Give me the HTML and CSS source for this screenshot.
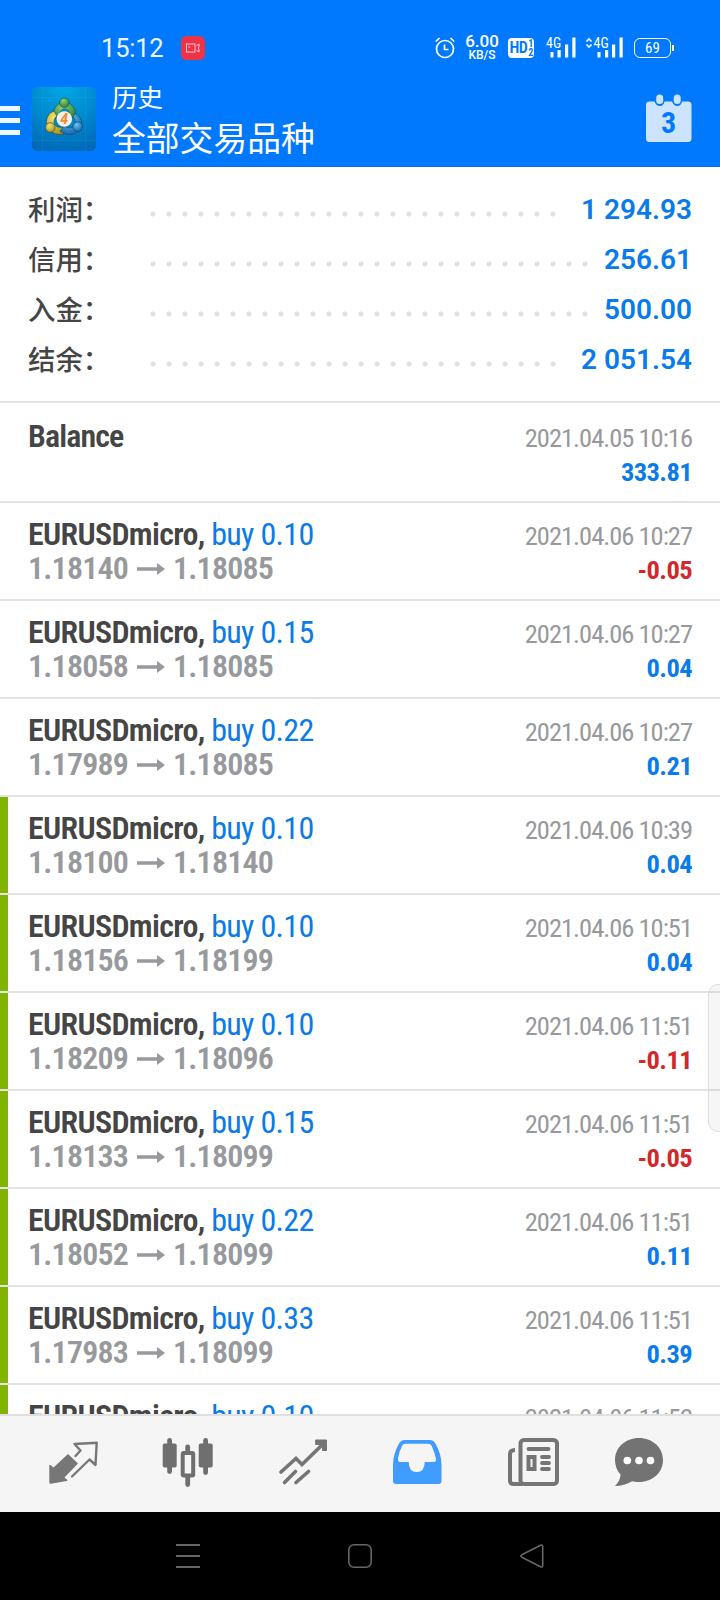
FILE: index.html
```
<!DOCTYPE html>
<html lang="zh-CN">
<head>
<meta charset="utf-8">
<title>历史</title>
<link rel="stylesheet" href="styles.css">
</head>
<body>
<div class="screen">
<header class="header">
  <div class="status">
    <span class="time">15:12</span>
    <svg class="rec" width="24" height="24" viewBox="0 0 24 24"><rect width="24" height="24" rx="5.5" fill="#eb3349"/><g fill="none" stroke="#ffc4cc" stroke-width="1"><rect x="5.500" y="8" width="8.500" height="8"/><path d="M15.500 9.500l2.500-1.500v3l-1 1 1 1v3l-2.500-1.500"/></g><circle cx="8.200" cy="11" r=".8" fill="#ffc4cc"/></svg>
    <svg class="alarm" width="20" height="22" viewBox="0 0 20 22" fill="none" stroke="#fff" stroke-width="1.700"><circle cx="10" cy="12" r="8.500"/><path d="M9.500 7.500v5h4M.8 4.500L4.500 1M19.200 4.500L15.500 1"/></svg>
    <span class="rate"><b>6.00</b><i>KB/S</i></span>
    <span class="hd"><span>HD</span><span class="hd-n"><i>1</i><i>2</i></span></span>
    <svg class="sig1" width="32" height="24" viewBox="0 0 32 24" fill="#fff"><text x="0" y="12">4G</text><rect x="4.500" y="16" width="3" height="5.500"/><rect x="11.500" y="14" width="3.200" height="7.500"/><rect x="19" y="8.500" width="3.200" height="13"/><rect x="26.300" y="1.500" width="3.200" height="20"/></svg>
    <svg class="sig2" width="40" height="24" viewBox="0 0 40 24" fill="#fff"><path d="M1.500 5.500L4 3l2.500 2.500M1.500 8.500L4 11l2.500-2.500" fill="none" stroke="#fff" stroke-width="1.700"/><text x="8.500" y="12">4G</text><rect x="12.500" y="16" width="3" height="5.500"/><rect x="20" y="14" width="3.200" height="7.500"/><rect x="27" y="8.500" width="3.200" height="13"/><rect x="34.500" y="1.500" width="3.200" height="20"/></svg>
    <span class="battery">69</span>
  </div>
  <div class="appbar">
    <div class="burger"><span></span><span></span><span></span></div>
    <svg class="logo" width="64" height="64" viewBox="0 0 64 64">
      <defs>
        <radialGradient id="bg" cx=".5" cy="0" r="1.1"><stop offset="0" stop-color="#00a8e6"/><stop offset=".55" stop-color="#0085cc"/><stop offset="1" stop-color="#0064b4"/></radialGradient>
        <radialGradient id="gr" cx=".4" cy=".3" r=".8"><stop offset="0" stop-color="#8fce7c"/><stop offset="1" stop-color="#1d7a2c"/></radialGradient>
        <radialGradient id="ye" cx=".4" cy=".3" r=".8"><stop offset="0" stop-color="#f2e570"/><stop offset="1" stop-color="#a38c12"/></radialGradient>
        <radialGradient id="bl" cx=".4" cy=".3" r=".8"><stop offset="0" stop-color="#6cc4f8"/><stop offset="1" stop-color="#0a5ba4"/></radialGradient>
      </defs>
      <rect width="64" height="64" rx="5" fill="url(#bg)"/>
      <path d="M0 10.500h64M0 53.500h64M10.500 0v64M53.500 0v64" stroke="#35b9e8" stroke-width=".6" opacity=".25"/>
      <g stroke="#174a4a" stroke-width=".6">
        <path d="M22 32c-3-8 3-17 10.500-17S46 24 43 31l-6-1c1-6-1-8-4.500-8S27 26 28 30z" fill="url(#gr)"/>
        <path d="M22 24c-6 2-9 9-7 15s9 10 17 8l-2-7c-4 1-8-1-8-5 0-3 1-4 3-6z" fill="url(#ye)"/>
        <path d="M43 26c6 3 9 10 5 16-4 7-14 7-20 2l4-5c5 3 9 2 11-2 1-3 0-5-2-7z" fill="url(#bl)"/>
        <circle cx="32.300" cy="15.700" r="4.800" fill="url(#gr)"/>
        <circle cx="18.300" cy="40.500" r="4.800" fill="url(#ye)"/>
        <circle cx="45.600" cy="39.700" r="4.800" fill="url(#bl)"/>
      </g>
      <circle cx="32.300" cy="32" r="7.800" fill="#f6f0ea"/>
      <text class="logo-n" x="32.200" y="36.800" text-anchor="middle">4</text>
    </svg>
    <div class="titles"><div class="t1">历史</div><div class="t2">全部交易品种</div></div>
    <svg class="cal" width="48" height="50" viewBox="0 0 48 50"><path d="M4 8.500H9.500a5.300 5.300 0 0 0 10 0h7.500a5.300 5.300 0 0 0 10 0H43a3.500 3.500 0 0 1 3.500 3.500v33.500a3.500 3.500 0 0 1-3.500 3.500H4.500A3.500 3.500 0 0 1 1 45.500V12a3.500 3.500 0 0 1 3-3.500z" fill="#cce4ff"/><rect x="10.300" y="1" width="9" height="12" rx="4.500" fill="#0079ff"/><rect x="27.800" y="1" width="9" height="12" rx="4.500" fill="#0079ff"/><rect x="11.200" y="1.500" width="7" height="9.500" rx="3.500" fill="#cce4ff"/><rect x="28.700" y="1.500" width="7" height="9.500" rx="3.500" fill="#cce4ff"/><text class="cal-n" x="23.700" y="40" text-anchor="middle">3</text></svg>
  </div>
</header>
<main class="main">
  <section class="summary">
    <div class="sum"><span class="lab">利润：</span><span class="dots"></span><span class="val">1 294.93</span></div>
    <div class="sum"><span class="lab">信用：</span><span class="dots"></span><span class="val">256.61</span></div>
    <div class="sum"><span class="lab">入金：</span><span class="dots"></span><span class="val">500.00</span></div>
    <div class="sum"><span class="lab">结余：</span><span class="dots"></span><span class="val">2 051.54</span></div>
  </section>
  <div class="row first"><div class="sym"><b>Balance</b></div><div class="date">2021.04.05 10:16</div><div class="px"></div><div class="pl">333.81</div></div>
  <div class="row"><div class="sym"><b>EURUSDmicro,</b> buy 0.10</div><div class="date">2021.04.06 10:27</div><div class="px"><span>1.18140</span><svg class="arr" viewBox="0 0 28 12"><path d="M0 4.300h20V0l8 6-8 6V7.700H0z"/></svg><span>1.18085</span></div><div class="pl neg">-0.05</div></div>
  <div class="row"><div class="sym"><b>EURUSDmicro,</b> buy 0.15</div><div class="date">2021.04.06 10:27</div><div class="px"><span>1.18058</span><svg class="arr" viewBox="0 0 28 12"><path d="M0 4.300h20V0l8 6-8 6V7.700H0z"/></svg><span>1.18085</span></div><div class="pl">0.04</div></div>
  <div class="row"><div class="sym"><b>EURUSDmicro,</b> buy 0.22</div><div class="date">2021.04.06 10:27</div><div class="px"><span>1.17989</span><svg class="arr" viewBox="0 0 28 12"><path d="M0 4.300h20V0l8 6-8 6V7.700H0z"/></svg><span>1.18085</span></div><div class="pl">0.21</div></div>
  <div class="row tp"><div class="sym"><b>EURUSDmicro,</b> buy 0.10</div><div class="date">2021.04.06 10:39</div><div class="px"><span>1.18100</span><svg class="arr" viewBox="0 0 28 12"><path d="M0 4.300h20V0l8 6-8 6V7.700H0z"/></svg><span>1.18140</span></div><div class="pl">0.04</div></div>
  <div class="row tp"><div class="sym"><b>EURUSDmicro,</b> buy 0.10</div><div class="date">2021.04.06 10:51</div><div class="px"><span>1.18156</span><svg class="arr" viewBox="0 0 28 12"><path d="M0 4.300h20V0l8 6-8 6V7.700H0z"/></svg><span>1.18199</span></div><div class="pl">0.04</div></div>
  <div class="row tp"><div class="sym"><b>EURUSDmicro,</b> buy 0.10</div><div class="date">2021.04.06 11:51</div><div class="px"><span>1.18209</span><svg class="arr" viewBox="0 0 28 12"><path d="M0 4.300h20V0l8 6-8 6V7.700H0z"/></svg><span>1.18096</span></div><div class="pl neg">-0.11</div></div>
  <div class="row tp"><div class="sym"><b>EURUSDmicro,</b> buy 0.15</div><div class="date">2021.04.06 11:51</div><div class="px"><span>1.18133</span><svg class="arr" viewBox="0 0 28 12"><path d="M0 4.300h20V0l8 6-8 6V7.700H0z"/></svg><span>1.18099</span></div><div class="pl neg">-0.05</div></div>
  <div class="row tp"><div class="sym"><b>EURUSDmicro,</b> buy 0.22</div><div class="date">2021.04.06 11:51</div><div class="px"><span>1.18052</span><svg class="arr" viewBox="0 0 28 12"><path d="M0 4.300h20V0l8 6-8 6V7.700H0z"/></svg><span>1.18099</span></div><div class="pl">0.11</div></div>
  <div class="row tp"><div class="sym"><b>EURUSDmicro,</b> buy 0.33</div><div class="date">2021.04.06 11:51</div><div class="px"><span>1.17983</span><svg class="arr" viewBox="0 0 28 12"><path d="M0 4.300h20V0l8 6-8 6V7.700H0z"/></svg><span>1.18099</span></div><div class="pl">0.39</div></div>
  <div class="row tp"><div class="sym"><b>EURUSDmicro,</b> buy 0.10</div><div class="date">2021.04.06 11:52</div></div>
  <div class="handle"></div>
</main>
<nav class="tabs">
  <svg viewBox="41 1430 64 64"><path d="M49.300 1466q0-2 1.500-.8l2.700 2.300 14.500-13.500 10 9.500-13.500 14 3 2.500q0 .8-1 1l-15.500 2.700q-1.700.3-1.700-1.500z" fill="#777"/><path d="M75.500 1456l5-5.500-6-6.500 22.200-1.200-1.200 22.200-6-5.500-17.500 17" fill="none" stroke="#777" stroke-width="2.400" stroke-linejoin="round" stroke-linecap="round"/></svg>
  <svg viewBox="156 1430 64 64" fill="#6f6f6f"><rect x="162.700" y="1443.500" width="14" height="24" rx="2"/><rect x="167.200" y="1438" width="4.800" height="36" rx="2.400"/><rect x="198.700" y="1443.500" width="14" height="24" rx="2"/><rect x="203.200" y="1438" width="4.800" height="37" rx="2.400"/><rect x="182.700" y="1453" width="10.500" height="22.500" rx="1" fill="none" stroke="#6f6f6f" stroke-width="4"/><rect x="185.300" y="1444.500" width="4.800" height="9" rx="2.400"/><rect x="185.300" y="1475" width="4.800" height="12" rx="2.400"/></svg>
  <svg viewBox="270.500 1430 64 64" fill="none" stroke="#757575" stroke-width="3.600" stroke-linecap="round"><path d="M280.500 1472l15-13.500 6 6L322 1444.500M284 1482.500l11-11M295.500 1482.500l12.500-11"/><path d="M315.500 1440h10.500v10.500h-4v-6h-6.500z" fill="#757575" stroke-width="1" stroke-linejoin="round"/></svg>
  <svg viewBox="385.500 1430 64 64"><path fill-rule="evenodd" d="M405 1440h25.500q3.500 0 5.500 3.500 6 11 6 21v16.500q0 3-3 3h-42.500q-3 0-3-3V1464.500q0-10 6-21 2-3.500 5.500-3.500zM406 1443.800q-2.500 0-3.400 2-2.800 5.500-4.100 12.700 0 3.500 2 3.500h8.700q0 10 8 10t8-10h9q2.800 0 2.200-3.500-1.600-7-4.300-12.700-1-2-3.500-2z" fill="#409cff"/></svg>
  <svg viewBox="500 1430 64 64" fill="none" stroke="#757575"><rect x="520.500" y="1440" width="36.500" height="44" rx="3.500" stroke-width="4"/><path d="M515 1450q-5 0-5 4v27q0 3 4 3h8" stroke-width="4"/><path d="M528.500 1449h20M542 1457h7M542 1463h7M542 1469h7" stroke-width="3.800" stroke-linecap="round"/><rect x="528.500" y="1457" width="6" height="12" stroke-width="4"/></svg>
  <svg viewBox="607 1430 64 64"><path d="M639 1438c13.500 0 24 9.500 24 22s-10.500 22-24 22c-2.500 0-5-.3-7-.8-5 2.800-11 4.800-17 4.800 3.500-3.500 5.500-7.500 5.500-11.500-3.500-3.800-5.500-9-5.500-14.500 0-12.500 10.500-22 24-22z" fill="#737373"/><g fill="#fff"><circle cx="627.300" cy="1460.500" r="3.800"/><circle cx="639" cy="1460.500" r="3.800"/><circle cx="650.500" cy="1460.500" r="3.800"/></g></svg>
</nav>
<footer class="sysnav">
  <svg width="26" height="26" viewBox="0 0 26 26" stroke="#666" stroke-width="1.800"><path d="M1 2h24M1 13h24M1 24h24"/></svg>
  <svg width="26" height="26" viewBox="0 0 26 26" fill="none" stroke="#666" stroke-width="1.600"><rect x="1.800" y="1.800" width="22.400" height="22.400" rx="5"/></svg>
  <svg width="26" height="26" viewBox="0 0 26 26" fill="none" stroke="#666" stroke-width="1.600" stroke-linejoin="round"><path d="M2.800 11.800 21.500 2.200q2.200-.8 2.200 1.300v19q0 2.100-2.200 1.300L2.800 14.200q-1.800-1.200 0-2.400z"/></svg>
</footer>
</div>
</body>
</html>
```
FILE: styles.css
```
* { box-sizing: border-box; }
body { margin: 0; font-family: Roboto, "Noto Sans CJK SC", sans-serif; }
svg { display: block; flex: none; }
i { font-style: normal; }
.screen { width: 720px; height: 1600px; display: flex; flex-direction: column; overflow: hidden; background: #fff; }

.header { height: 167px; flex: none; background: #0079ff; border-bottom: 1px solid #0a6fd6; color: #fff; }
.status { height: 78px; padding: 17px 45px 0 101px; display: flex; align-items: center; }
.time { width: 80px; font-size: 25.500px; letter-spacing: -.2px; color: #eaf4ff; }
.alarm { margin-left: 230px; }
.rate { width: 36px; margin-left: 9px; display: flex; flex-direction: column; align-items: center; }
.rate b { height: 13px; font-size: 17px; line-height: 13px; font-weight: 500; }
.rate i { height: 13px; font-size: 12px; line-height: 15px; font-weight: 500; }
.hd { width: 26px; height: 20px; margin-left: 8px; border-radius: 4px; background: #fff; color: #0079ff; display: flex; align-items: center; justify-content: center; font: 600 16px/20px "Roboto Condensed", Roboto, sans-serif; letter-spacing: -.6px; }
.hd-n { display: flex; flex-direction: column; padding-left: 1px; font-size: 10px; font-weight: 700; line-height: 9px; }
.sig1 { margin-left: 12px; }
.sig2 { margin-left: 7px; }
.sig1 text, .sig2 text { font: 400 14px "Roboto Condensed", Roboto, sans-serif; }
.battery { position: relative; width: 37px; height: 20px; margin-left: 9px; border: 1.500px solid #fff; border-radius: 6px; font: 400 15px/18px "Roboto Condensed", Roboto, sans-serif; text-align: center; }
.battery::after { content: ""; position: absolute; right: -4px; top: 6px; width: 2px; height: 6px; background: #fff; }

.appbar { height: 88px; display: flex; align-items: flex-start; }
.burger { width: 20px; padding-top: 28px; display: flex; flex-direction: column; gap: 7px; }
.burger span { height: 5px; background: #eef6ff; }
.logo { margin: 9px 16px 0 12px; }
.logo-n { font: italic 700 14px Roboto, sans-serif; fill: #f08a32; }
.titles { flex: 1; font-family: "Noto Sans CJK SC", sans-serif; }
.t1 { font-size: 25.500px; line-height: 36px; }
.t2 { font-size: 33.800px; line-height: 45px; }
.cal { margin: 15px 27px 0 0; }
.cal-n { font: 700 30px "Roboto Condensed", sans-serif; fill: #0079ff; }

.main { position: relative; flex: 1; min-height: 0; overflow: hidden; }
.summary { height: 234px; padding: 17px 28px 0; }
.sum { height: 50px; display: flex; align-items: center; }
.lab { width: 117px; font: 500 27.400px/48px "Noto Sans CJK SC", sans-serif; padding-bottom: 2px; color: #454545; white-space: nowrap; }
.dots { flex: 1; height: 6px; margin: 10px 15px 0 0; background: radial-gradient(circle at 8px 3px, #e2e2e2 2.200px, transparent 2.900px) 0 0 / 16px 6px repeat-x; }
.val { font-size: 28px; font-weight: 600; color: #0a7bea; }

.row { height: 98px; padding: 14px 28px 0; border-top: 2px solid #e3e3e3; display: grid; grid-template-columns: auto auto; grid-template-rows: 34px 34px; justify-content: space-between; align-items: baseline; font-family: "Roboto Condensed", Roboto, sans-serif; line-height: 34px; white-space: nowrap; }
.row.first { height: 100px; padding-top: 16px; }
.sym { font-size: 32px; letter-spacing: -.680px; color: #0a7bea; }
.sym b { font-weight: 600; color: #454545; }
.first .sym { letter-spacing: -.9px; }
.date { font-size: 26.500px; letter-spacing: -1px; color: #97999d; text-align: right; }
.px { display: flex; align-items: center; gap: 8.500px; font-size: 32px; letter-spacing: -.800px; font-weight: 600; color: #97999d; }
.px span { width: 100px; }
.arr { width: 28px; height: 12px; margin-top: 2px; fill: #97999d; }
.pl { font-size: 26.500px; letter-spacing: -.600px; font-weight: 700; color: #0a7bea; text-align: right; }
.first .pl { padding-top: 2px; }
.neg { color: #d0282b; }
.tp { background: linear-gradient(#80b400, #80b400) left / 8px 100% no-repeat; }
.handle { position: absolute; right: -2px; top: 817px; width: 14px; height: 148px; border: 1px solid #dedede; border-radius: 10px 0 0 10px; background: rgba(0, 0, 0, .035); }

.tabs { height: 98px; flex: none; padding: 14px 0 0 41px; background: #f5f5f5; border-top: 2px solid #e0e0e0; display: flex; gap: 50.750px; }
.tabs svg { width: 64px; height: 64px; }
.tabs svg:last-child { margin-left: -7.750px; }
.sysnav { height: 88px; flex: none; background: #000; display: flex; justify-content: center; gap: 146px; padding-top: 31px; }
```
